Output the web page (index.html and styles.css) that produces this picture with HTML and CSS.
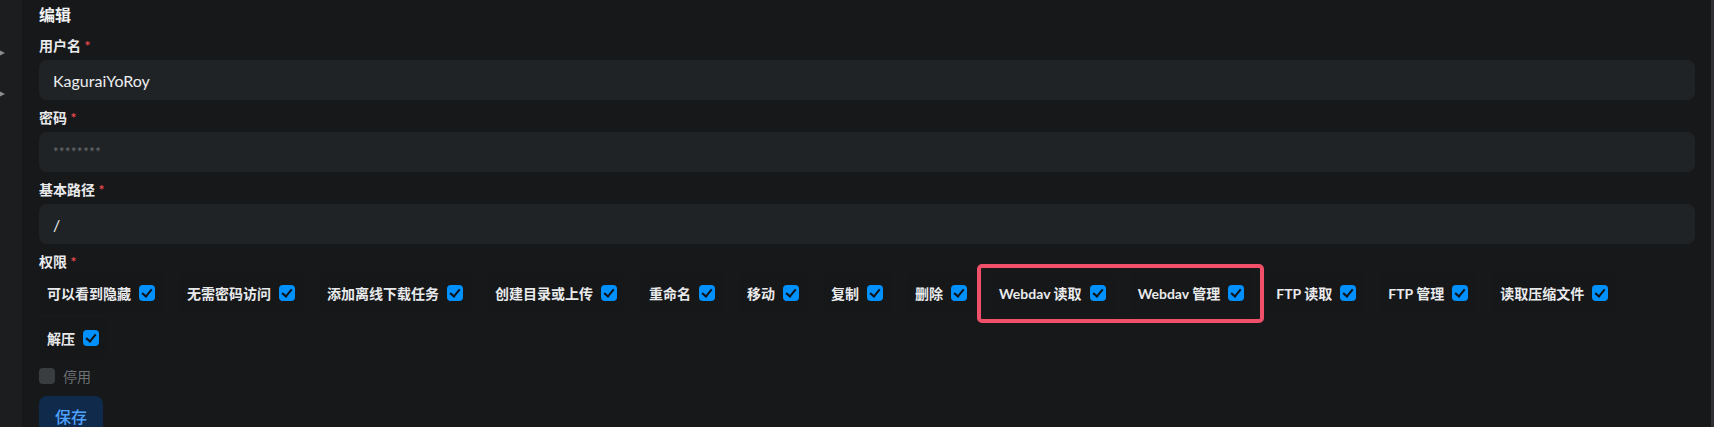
FILE: index.html
```html
<!DOCTYPE html>
<html lang="zh-CN">
<head>
<meta charset="utf-8">
<title>编辑</title>
<link rel="stylesheet" href="styles.css">
</head>
<body>
<div class="app">
  <aside class="sidebar">
    <span class="arrow"></span>
    <span class="arrow"></span>
  </aside>
  <main class="main">
    <h2 class="title">编辑</h2>
    <div class="field">
      <label class="label">用户名 <span class="req">*</span></label>
      <div class="input">KaguraiYoRoy</div>
    </div>
    <div class="field">
      <label class="label">密码 <span class="req">*</span></label>
      <div class="input placeholder">********</div>
    </div>
    <div class="field">
      <label class="label">基本路径 <span class="req">*</span></label>
      <div class="input">/</div>
    </div>
    <div class="field perms-field">
      <label class="label">权限 <span class="req">*</span></label>
      <div class="perms">
        <div class="perm"><span>可以看到隐藏</span><span class="cb"></span></div>
        <div class="perm"><span>无需密码访问</span><span class="cb"></span></div>
        <div class="perm"><span>添加离线下载任务</span><span class="cb"></span></div>
        <div class="perm"><span>创建目录或上传</span><span class="cb"></span></div>
        <div class="perm"><span>重命名</span><span class="cb"></span></div>
        <div class="perm"><span>移动</span><span class="cb"></span></div>
        <div class="perm"><span>复制</span><span class="cb"></span></div>
        <div class="perm"><span>删除</span><span class="cb"></span></div>
        <div class="perm"><span>Webdav 读取</span><span class="cb"></span></div>
        <div class="perm"><span>Webdav 管理</span><span class="cb"></span></div>
        <div class="perm"><span>FTP 读取</span><span class="cb"></span></div>
        <div class="perm"><span>FTP 管理</span><span class="cb"></span></div>
        <div class="perm"><span>读取压缩文件</span><span class="cb"></span></div>
        <div class="perm"><span>解压</span><span class="cb"></span></div>
      </div>
    </div>
    <div class="disabled-row"><span class="cb-off"></span><span>停用</span></div>
    <button class="save">保存</button>
    <div class="highlight"></div>
  </main>
  <div class="scroll"></div>
</div>
</body>
</html>
```
FILE: styles.css
```css
html, body {
  margin: 0;
  padding: 0;
  height: 100%;
  overflow: hidden;
  background: #17181a;
}
body {
  font-family: Lato, "Noto Sans CJK SC", sans-serif;
  color: #e9eaec;
}
.app {
  display: flex;
  height: 427px;
}
.sidebar {
  width: 22px;
  flex: none;
  background: #1c1d1f;
  display: flex;
  flex-direction: column;
  padding-top: 50px;
  gap: 35px;
}
.arrow {
  width: 0;
  height: 0;
  border-top: 3.5px solid transparent;
  border-bottom: 3.5px solid transparent;
  border-left: 6px solid #8a8c90;
  margin-left: -1px;
}
.main {
  position: relative;
  flex: 1;
  padding: 3px 16px 0 17px;
}
.scroll {
  width: 3px;
  flex: none;
  background: #303134;
}
.title {
  margin: 0 0 9px;
  font-size: 16px;
  line-height: 24px;
  font-weight: 700;
  color: #f0f1f2;
}
.field {
  display: flex;
  flex-direction: column;
  margin-bottom: 8px;
}
.label {
  font-size: 14px;
  line-height: 20px;
  font-weight: 700;
  margin-bottom: 4px;
  color: #e9eaec;
}
.req {
  color: #e5484d;
}
.input {
  height: 40px;
  box-sizing: border-box;
  background: #202325;
  border-radius: 8px;
  padding: 0 14px;
  display: flex;
  align-items: center;
  font-size: 16px;
  color: #eceef0;
}
.placeholder {
  color: #6b6f74;
  font-size: 13px;
  letter-spacing: 0.5px;
}
.perms-field .label {
  margin-bottom: 1px;
}
.perms-field {
  margin-bottom: 0;
}
.perms {
  display: flex;
  flex-wrap: wrap;
  column-gap: 16px;
  row-gap: 5px;
}
.perm {
  height: 40px;
  box-sizing: border-box;
  padding: 0 8px;
  display: flex;
  align-items: center;
  gap: 8px;
  font-size: 14px;
  font-weight: 700;
  background: #161719;
  border-radius: 6px;
  color: #e9eaec;
}
.cb {
  width: 16px;
  height: 16px;
  border-radius: 4px;
  background: #0091ff;
  position: relative;
  flex: none;
}
.cb::after {
  content: "";
  position: absolute;
  left: 5px;
  top: 2px;
  width: 4px;
  height: 8px;
  border-right: 2.2px solid #101214;
  border-bottom: 2.2px solid #101214;
  transform: rotate(40deg);
}
.disabled-row {
  display: flex;
  align-items: center;
  gap: 8px;
  margin-top: 8px;
  height: 20px;
  font-size: 14px;
  color: #6e7175;
}
.cb-off {
  width: 16px;
  height: 16px;
  border-radius: 4px;
  background: #3a3d40;
}
.save {
  margin-top: 10px;
  height: 40px;
  padding: 0 16px;
  border: none;
  border-radius: 8px;
  background: #0f2a4b;
  color: #4ea3ff;
  font-family: Lato, "Noto Sans CJK SC", sans-serif;
  font-size: 16px;
  font-weight: 500;
}
.highlight {
  position: absolute;
  left: 955px;
  top: 264px;
  width: 279px;
  height: 51px;
  border: 4px solid #f0506a;
  border-radius: 5px;
}
```
